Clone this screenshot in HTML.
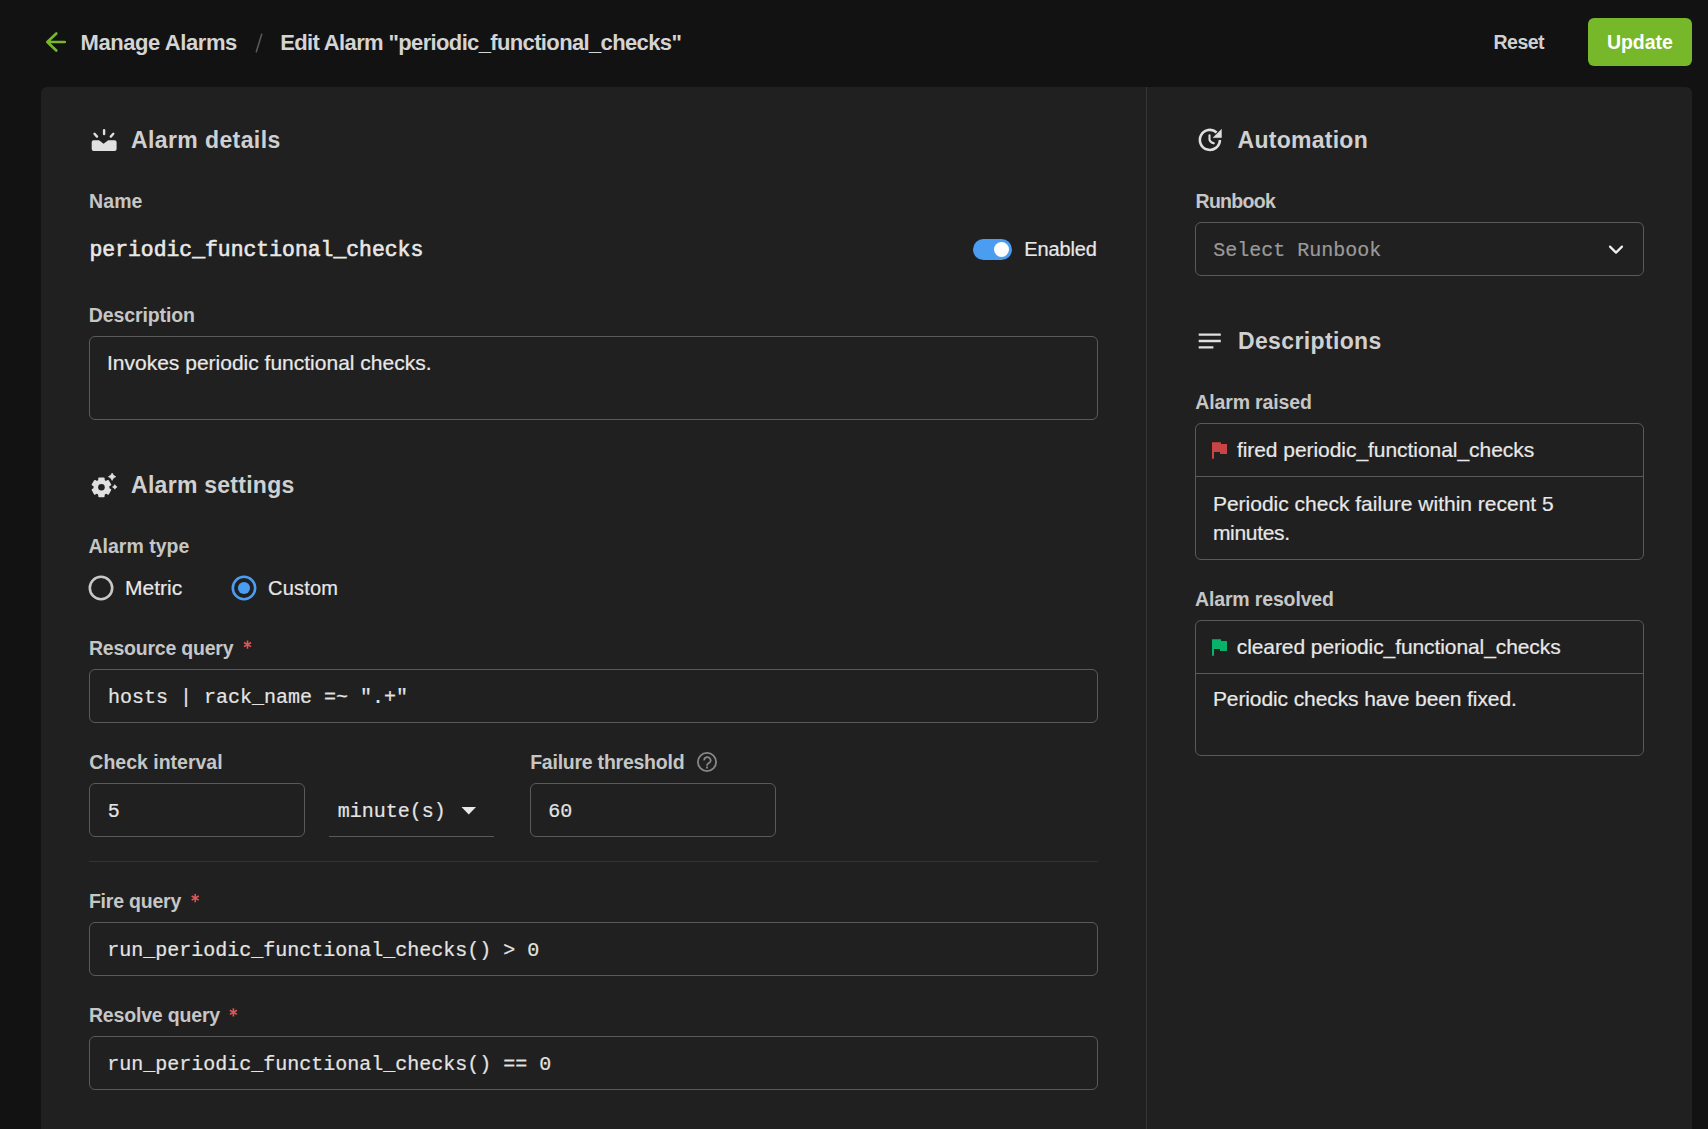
<!DOCTYPE html>
<html><head><meta charset="utf-8">
<style>
*{margin:0;padding:0;box-sizing:border-box;}
html,body{width:1708px;height:1129px;overflow:hidden;background:#121212;}
body{position:relative;font-family:"Liberation Sans",sans-serif;}
.t{position:absolute;white-space:nowrap;line-height:1;}
.box{position:absolute;border:1px solid #5a5a5a;border-radius:6px;}
svg{position:absolute;overflow:visible;left:0;top:0;}
</style></head>
<body>
<!-- header -->
<svg width="1" height="1"><path d="M261.7 34.3L256.3 51.7" stroke="#5c5c5c" stroke-width="1.5" stroke-linecap="round"/></svg>
<svg width="1" height="1"><path d="M64.8 42H47.3M56.3 33.5L47.3 42L56.3 50.5" fill="none" stroke="#76b82a" stroke-width="2.6" stroke-linecap="round" stroke-linejoin="round"/></svg>
<div style="position:absolute;left:1588px;top:18px;width:104px;height:48px;background:#76b82a;border-radius:6px"></div>
<!-- panel -->
<div style="position:absolute;left:41px;top:87px;width:1651px;height:1100px;background:#202020;border-radius:6px"></div>
<div style="position:absolute;left:1146px;top:87px;width:1px;height:1050px;background:#363636"></div>
<!-- alarm details icon -->
<svg width="1" height="1">
 <path d="M93.7 140.2H99L103.6 143.8L108.2 140.2H114.6Q116.6 140.2 116.6 142.2V148.9Q116.6 150.9 114.6 150.9H93.7Q91.7 150.9 91.7 148.9V142.2Q91.7 140.2 93.7 140.2Z" fill="#e0e0e0"/>
 <path d="M104.1 130.2V134M94.5 133.8L97 136.6M113.3 133.8L110.8 136.6" stroke="#e0e0e0" stroke-width="2.4" stroke-linecap="round"/>
</svg>
<!-- toggle -->
<div style="position:absolute;left:973px;top:239px;width:39px;height:21px;border-radius:11px;background:#4a9df0"></div>
<div style="position:absolute;left:994px;top:242px;width:15px;height:15px;border-radius:50%;background:#fff"></div>
<!-- description box -->
<div class="box" style="left:89px;top:336px;width:1009px;height:84px"></div>
<!-- gear icon -->
<svg width="1" height="1"><circle cx="101.45" cy="487.3" r="7.9" fill="#e0e0e0"/><rect x="98.25" y="477.4" width="6.4" height="5" rx="1" fill="#e0e0e0" transform="rotate(-60 101.45 487.3)"/><rect x="98.25" y="477.4" width="6.4" height="5" rx="1" fill="#e0e0e0" transform="rotate(0 101.45 487.3)"/><rect x="98.25" y="477.4" width="6.4" height="5" rx="1" fill="#e0e0e0" transform="rotate(60 101.45 487.3)"/><rect x="98.25" y="477.4" width="6.4" height="5" rx="1" fill="#e0e0e0" transform="rotate(120 101.45 487.3)"/><rect x="98.25" y="477.4" width="6.4" height="5" rx="1" fill="#e0e0e0" transform="rotate(180 101.45 487.3)"/><rect x="98.25" y="477.4" width="6.4" height="5" rx="1" fill="#e0e0e0" transform="rotate(240 101.45 487.3)"/><circle cx="101.45" cy="487.3" r="3.3" fill="#202020"/><path d="M112.1 473.0Q113.0 475.8 115.8 476.7Q113.0 477.6 112.1 480.4Q111.2 477.6 108.4 476.7Q111.2 475.8 112.1 473.0Z" fill="#e0e0e0" stroke="#e0e0e0" stroke-width="0.6" stroke-linejoin="round"/><path d="M114.8 484.6Q115.4 486.3 117.1 486.9Q115.4 487.5 114.8 489.2Q114.2 487.5 112.5 486.9Q114.2 486.3 114.8 484.6Z" fill="#e0e0e0" stroke="#e0e0e0" stroke-width="0.6" stroke-linejoin="round"/></svg>
<!-- radios -->
<svg width="1" height="1"><circle cx="101" cy="588" r="11.2" fill="none" stroke="#c8c8c8" stroke-width="2.6"/><circle cx="244" cy="588" r="11.2" fill="none" stroke="#4a9df0" stroke-width="2.6"/><circle cx="244" cy="588" r="6.1" fill="#4a9df0"/></svg>
<!-- inputs -->
<div class="box" style="left:89px;top:669px;width:1009px;height:54px"></div>
<div class="box" style="left:89px;top:783px;width:216px;height:54px"></div>
<svg width="1" height="1"><path d="M461.5 807H476L468.75 814.5Z" fill="#e8e8e8"/></svg>
<div style="position:absolute;left:329px;top:836px;width:165px;height:1px;background:#5a5a5a"></div>
<svg width="1" height="1"><circle cx="707" cy="762" r="9.1" fill="none" stroke="#888888" stroke-width="1.8"/><path d="M704.2 760.4A3.2 3.2 0 1 1 708.9 763.1Q707.0 764.1 707.0 765.7" fill="none" stroke="#888888" stroke-width="1.75"/><rect x="706.05" y="766.6" width="1.9" height="1.9" fill="#888888"/></svg>
<div class="box" style="left:530px;top:783px;width:246px;height:54px"></div>
<div style="position:absolute;left:89px;top:861px;width:1009px;height:1px;background:#333"></div>
<div class="box" style="left:89px;top:922px;width:1009px;height:54px"></div>
<div class="box" style="left:89px;top:1036px;width:1009px;height:54px"></div>
<svg width="1" height="1"><path d="M247.50 640.50L247.50 648.70M243.95 642.55L251.05 646.65M243.95 646.65L251.05 642.55" stroke="#e05555" stroke-width="1.6"/><path d="M195.20 894.00L195.20 902.20M191.65 896.05L198.75 900.15M191.65 900.15L198.75 896.05" stroke="#e05555" stroke-width="1.6"/><path d="M233.40 1008.20L233.40 1016.40M229.85 1010.25L236.95 1014.35M229.85 1014.35L236.95 1010.25" stroke="#e05555" stroke-width="1.6"/></svg>
<!-- right column -->
<svg width="1" height="1"><path d="M1219.90 140.07A10.0 10.0 0 1 1 1216.59 132.47" fill="none" stroke="#e0e0e0" stroke-width="2.6"/><path d="M1221.4 129.4V137.6H1213.2Z" fill="#e0e0e0" stroke="#e0e0e0" stroke-width="0.6" stroke-linejoin="round"/><path d="M1209.5 135.2V139.8Q1210.3 142.2 1213.8 143.3" fill="none" stroke="#e0e0e0" stroke-width="2.1" stroke-linecap="round"/></svg>
<div class="box" style="left:1195px;top:222px;width:449px;height:54px"></div>
<svg width="1" height="1"><path d="M1610 246.6L1616 252.6L1622 246.6" fill="none" stroke="#eeeeee" stroke-width="2.2" stroke-linecap="round" stroke-linejoin="round"/></svg>
<svg width="1" height="1"><path d="M1198.7 334.6H1220.8M1198.7 341H1220.8M1198.7 347.4H1213.4" stroke="#e0e0e0" stroke-width="2.4"/></svg>
<div class="box" style="left:1195px;top:423px;width:449px;height:137px"></div>
<div style="position:absolute;left:1196px;top:476px;width:447px;height:1px;background:#5a5a5a"></div>
<svg width="1" height="1"><path d="M1212 442.2H1221V444H1227V454H1220V452H1214V458.8H1212Z" fill="#c94545"/></svg>
<div class="box" style="left:1195px;top:620px;width:449px;height:136px"></div>
<div style="position:absolute;left:1196px;top:673px;width:447px;height:1px;background:#5a5a5a"></div>
<svg width="1" height="1"><path d="M1212 639.2H1221V641H1227V651H1220V649H1214V655.8H1212Z" fill="#08b26b"/></svg>

<div class="t" style="left:80.5px;top:32px;font-family:'Liberation Sans';font-weight:bold;font-size:22px;color:#d4d4d4;letter-spacing:-0.42px;">Manage Alarms</div>
<div class="t" style="left:280.2px;top:32px;font-family:'Liberation Sans';font-weight:bold;font-size:22px;color:#d4d4d4;letter-spacing:-0.64px;">Edit Alarm "periodic_functional_checks"</div>
<div class="t" style="left:1493.5px;top:33px;font-family:'Liberation Sans';font-weight:bold;font-size:19.5px;color:#d0d0d0;letter-spacing:-0.50px;">Reset</div>
<div class="t" style="left:1607.0px;top:33px;font-family:'Liberation Sans';font-weight:bold;font-size:19.5px;color:#d0d0d0;letter-spacing:-0.06px;color:#ffffff;">Update</div>
<div class="t" style="left:131.0px;top:129px;font-family:'Liberation Sans';font-weight:bold;font-size:23px;color:#d0d0d0;letter-spacing:0.40px;">Alarm details</div>
<div class="t" style="left:89.0px;top:192px;font-family:'Liberation Sans';font-weight:bold;font-size:19.5px;color:#c6c6c6;letter-spacing:0.10px;">Name</div>
<div class="t" style="left:89.5px;top:240px;font-family:'Liberation Mono';font-weight:normal;font-size:21.4px;color:#e8e8e8;-webkit-text-stroke-width:0.6px;">periodic_functional_checks</div>
<div class="t" style="left:1024.3px;top:239px;font-family:'Liberation Sans';font-weight:normal;font-size:20px;color:#e8e8e8;-webkit-text-stroke-width:0.2px;letter-spacing:-0.13px;">Enabled</div>
<div class="t" style="left:88.8px;top:306px;font-family:'Liberation Sans';font-weight:bold;font-size:19.5px;color:#c6c6c6;letter-spacing:-0.11px;">Description</div>
<div class="t" style="left:107.0px;top:352px;font-family:'Liberation Sans';font-weight:normal;font-size:21px;color:#e8e8e8;-webkit-text-stroke-width:0.2px;">Invokes periodic functional checks.</div>
<div class="t" style="left:131.1px;top:474px;font-family:'Liberation Sans';font-weight:bold;font-size:23px;color:#d0d0d0;letter-spacing:0.26px;">Alarm settings</div>
<div class="t" style="left:88.5px;top:537px;font-family:'Liberation Sans';font-weight:bold;font-size:19.5px;color:#c6c6c6;">Alarm type</div>
<div class="t" style="left:125.1px;top:577px;font-family:'Liberation Sans';font-weight:normal;font-size:21px;color:#e8e8e8;-webkit-text-stroke-width:0.2px;">Metric</div>
<div class="t" style="left:268.0px;top:578px;font-family:'Liberation Sans';font-weight:normal;font-size:20px;color:#e8e8e8;-webkit-text-stroke-width:0.2px;letter-spacing:0.20px;">Custom</div>
<div class="t" style="left:89.0px;top:639px;font-family:'Liberation Sans';font-weight:bold;font-size:19.5px;color:#c6c6c6;letter-spacing:-0.22px;">Resource query</div>
<div class="t" style="left:108.0px;top:688px;font-family:'Liberation Mono';font-weight:normal;font-size:20px;color:#e4e4e4;-webkit-text-stroke-width:0.2px;">hosts | rack_name =~ ".+"</div>
<div class="t" style="left:89.3px;top:753px;font-family:'Liberation Sans';font-weight:bold;font-size:19.5px;color:#c6c6c6;">Check interval</div>
<div class="t" style="left:107.8px;top:802px;font-family:'Liberation Mono';font-weight:normal;font-size:20px;color:#e4e4e4;-webkit-text-stroke-width:0.2px;">5</div>
<div class="t" style="left:337.7px;top:802px;font-family:'Liberation Mono';font-weight:normal;font-size:20px;color:#e4e4e4;-webkit-text-stroke-width:0.2px;">minute(s)</div>
<div class="t" style="left:530.2px;top:753px;font-family:'Liberation Sans';font-weight:bold;font-size:19.5px;color:#c6c6c6;letter-spacing:-0.24px;">Failure threshold</div>
<div class="t" style="left:548.2px;top:802px;font-family:'Liberation Mono';font-weight:normal;font-size:20px;color:#e4e4e4;-webkit-text-stroke-width:0.2px;">60</div>
<div class="t" style="left:88.9px;top:892px;font-family:'Liberation Sans';font-weight:bold;font-size:19.5px;color:#c6c6c6;letter-spacing:-0.21px;">Fire query</div>
<div class="t" style="left:107.3px;top:941px;font-family:'Liberation Mono';font-weight:normal;font-size:20px;color:#e4e4e4;-webkit-text-stroke-width:0.2px;">run_periodic_functional_checks() &gt; 0</div>
<div class="t" style="left:88.9px;top:1006px;font-family:'Liberation Sans';font-weight:bold;font-size:19.5px;color:#c6c6c6;letter-spacing:-0.17px;">Resolve query</div>
<div class="t" style="left:107.3px;top:1055px;font-family:'Liberation Mono';font-weight:normal;font-size:20px;color:#e4e4e4;-webkit-text-stroke-width:0.2px;">run_periodic_functional_checks() == 0</div>
<div class="t" style="left:1237.5px;top:129px;font-family:'Liberation Sans';font-weight:bold;font-size:23px;color:#d0d0d0;letter-spacing:0.27px;">Automation</div>
<div class="t" style="left:1195.5px;top:192px;font-family:'Liberation Sans';font-weight:bold;font-size:19.5px;color:#c6c6c6;letter-spacing:-0.70px;">Runbook</div>
<div class="t" style="left:1213.3px;top:241px;font-family:'Liberation Mono';font-weight:normal;font-size:20px;color:#e4e4e4;-webkit-text-stroke-width:0.2px;color:#9a9a9a;">Select Runbook</div>
<div class="t" style="left:1238.0px;top:330px;font-family:'Liberation Sans';font-weight:bold;font-size:23px;color:#d0d0d0;letter-spacing:0.36px;">Descriptions</div>
<div class="t" style="left:1195.3px;top:393px;font-family:'Liberation Sans';font-weight:bold;font-size:19.5px;color:#c6c6c6;letter-spacing:-0.15px;">Alarm raised</div>
<div class="t" style="left:1236.9px;top:439px;font-family:'Liberation Sans';font-weight:normal;font-size:21px;color:#e8e8e8;-webkit-text-stroke-width:0.2px;letter-spacing:-0.05px;">fired periodic_functional_checks</div>
<div class="t" style="left:1212.9px;top:493px;font-family:'Liberation Sans';font-weight:normal;font-size:21px;color:#e8e8e8;-webkit-text-stroke-width:0.2px;">Periodic check failure within recent 5</div>
<div class="t" style="left:1212.9px;top:522px;font-family:'Liberation Sans';font-weight:normal;font-size:21px;color:#e8e8e8;-webkit-text-stroke-width:0.2px;letter-spacing:-0.31px;">minutes.</div>
<div class="t" style="left:1195.0px;top:590px;font-family:'Liberation Sans';font-weight:bold;font-size:19.5px;color:#c6c6c6;letter-spacing:-0.15px;">Alarm resolved</div>
<div class="t" style="left:1236.8px;top:636px;font-family:'Liberation Sans';font-weight:normal;font-size:21px;color:#e8e8e8;-webkit-text-stroke-width:0.2px;letter-spacing:-0.09px;">cleared periodic_functional_checks</div>
<div class="t" style="left:1212.9px;top:688px;font-family:'Liberation Sans';font-weight:normal;font-size:21px;color:#e8e8e8;-webkit-text-stroke-width:0.2px;letter-spacing:-0.10px;">Periodic checks have been fixed.</div>
</body></html>
